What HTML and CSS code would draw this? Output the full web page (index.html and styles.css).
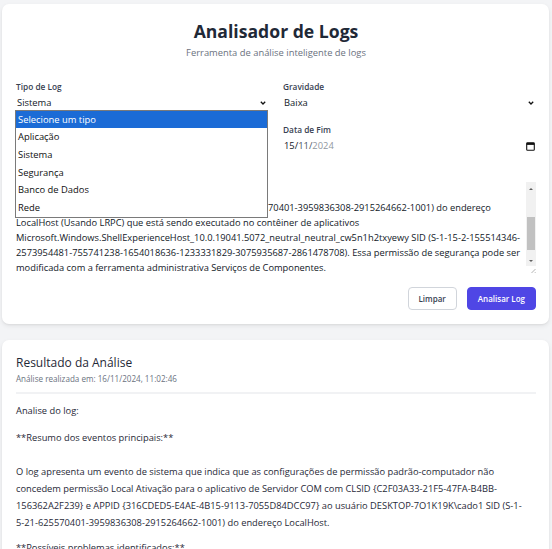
FILE: index.html
```html
<!DOCTYPE html>
<html lang="pt-BR">
<head>
<meta charset="utf-8">
<title>Analisador de Logs</title>
<link rel="stylesheet" href="styles.css">
</head>
<body>
<main class="page">
  <section class="card form-card">
    <header class="head">
      <h1 class="title">Analisador de Logs</h1>
      <p class="subtitle">Ferramenta de análise inteligente de logs</p>
    </header>

    <div class="grid">
      <div class="field">
        <label class="label">Tipo de Log</label>
        <div class="select">
          <span class="value">Sistema</span>
          <svg class="chev" viewBox="0 0 6 4" width="6" height="4"><polyline points="0.8,0.8 3,3 5.2,0.8" fill="none" stroke="#111" stroke-width="1.3"/></svg>
          <ul class="dropdown">
            <li class="opt active">Selecione um tipo</li>
            <li class="opt">Aplicação</li>
            <li class="opt">Sistema</li>
            <li class="opt">Segurança</li>
            <li class="opt">Banco de Dados</li>
            <li class="opt">Rede</li>
          </ul>
        </div>
      </div>
      <div class="field">
        <label class="label">Gravidade</label>
        <div class="select">
          <span class="value">Baixa</span>
          <svg class="chev" viewBox="0 0 6 4" width="6" height="4"><polyline points="0.8,0.8 3,3 5.2,0.8" fill="none" stroke="#111" stroke-width="1.3"/></svg>
        </div>
      </div>
      <div class="field">
        <label class="label">Data de Início</label>
        <div class="select">
          <span class="value">01/11/2024</span>
        </div>
      </div>
      <div class="field">
        <label class="label">Data de Fim</label>
        <div class="select">
          <span class="value"><span class="d1">15/</span><span class="d2">11/</span><span class="d3">2024</span></span>
          <svg class="cal" viewBox="0 0 9 9" width="9" height="9"><rect x="0.7" y="0.9" width="7.6" height="7.4" rx="0.8" fill="none" stroke="#111" stroke-width="1.1"/><rect x="0.7" y="0.9" width="7.6" height="2" fill="#111"/></svg>
        </div>
      </div>
    </div>

    <div class="field full">
      <label class="label">Conteúdo do Log</label>
      <div class="textarea">
        <div class="ta-text">
          <div class="ta-line">{316CDED5-E4AE-4B15-9113-7055D84DCC97}</div>
          <div class="ta-line"><span class="hidden-part">ao usuário DESKTOP-7O1K19K\cado1 SID (S-1-5-21-6255</span>70401-3959836308-2915264662-1001) do endereço</div>
          <div class="ta-line">LocalHost (Usando LRPC) que está sendo executado no contêiner de aplicativos</div>
          <div class="ta-line">Microsoft.Windows.ShellExperienceHost_10.0.19041.5072_neutral_neutral_cw5n1h2txyewy SID (S-1-15-2-155514346-</div>
          <div class="ta-line">2573954481-755741238-1654018636-1233331829-3075935687-2861478708). Essa permissão de segurança pode ser</div>
          <div class="ta-line">modificada com a ferramenta administrativa Serviços de Componentes.</div>
        </div>
        <div class="scrollbar">
          <svg class="arrow" viewBox="0 0 10 10" width="10" height="10"><polygon points="3,6 5,4 7,6" fill="#606060"/></svg>
          <div class="track"><div class="thumb"></div></div>
          <svg class="arrow" viewBox="0 0 10 10" width="10" height="10"><polygon points="3,4 5,6 7,4" fill="#606060"/></svg>
          <svg class="grip" viewBox="0 0 10 10" width="10" height="10"><line x1="3" y1="9.5" x2="9.5" y2="3" stroke="#a0a0a0" stroke-width="0.8"/><line x1="6.2" y1="9.5" x2="9.5" y2="6.2" stroke="#a0a0a0" stroke-width="0.8"/></svg>
        </div>
      </div>
    </div>

    <div class="actions">
      <button class="btn btn-light">Limpar</button>
      <button class="btn btn-primary">Analisar Log</button>
    </div>
  </section>

  <section class="card result-card">
    <h2 class="r-title">Resultado da Análise</h2>
    <p class="r-meta">Análise realizada em: 16/11/2024, 11:02:46</p>
    <hr class="rule">
    <div class="r-body">
      <p class="para p1">Analise do log:</p>
      <p class="para p2">**Resumo dos eventos principais:**</p>
      <p class="para p3">O log apresenta um evento de sistema que indica que as configurações de permissão padrão-computador não<br>concedem permissão Local Ativação para o aplicativo de Servidor COM com CLSID {C2F03A33-21F5-47FA-B4BB-<br>156362A2F239} e APPID {316CDED5-E4AE-4B15-9113-7055D84DCC97} ao usuário DESKTOP-7O1K19K\cado1 SID (S-1-<br>5-21-625570401-3959836308-2915264662-1001) do endereço LocalHost.</p>
      <p class="para">**Possíveis problemas identificados:**</p>
      <p class="para">1. Permissões de ativação local insuficientes para o usuário.</p>
    </div>
  </section>
</main>
</body>
</html>
```

FILE: styles.css
```css
* { box-sizing: border-box; }
html, body { margin: 0; padding: 0; }
body {
  background: #f3f4f6;
  font-family: "Open Sans", "Noto Sans", sans-serif;
  color: #1f2937;
  overflow: hidden;
  height: 549px;
}
.page {
  padding: 4px 3px 0 2px;
  display: flex;
  flex-direction: column;
  gap: 16px;
}
.card {
  background: #fff;
  border-radius: 7px;
  box-shadow: 0 2px 5px rgba(0, 0, 0, 0.07), 0 1px 2px rgba(0, 0, 0, 0.05);
}
.form-card {
  padding: 13px 13px 14px 14px;
}
.head { text-align: center; margin-bottom: 20px; }
.title {
  margin: 0;
  font-size: 17.6px;
  line-height: 28px;
  font-weight: 700;
  color: #1f2937;
}
.subtitle {
  margin: 1px 0 0;
  font-size: 9.4px;
  line-height: 14px;
  color: #6b7280;
}
.grid {
  display: grid;
  grid-template-columns: 252px 253px;
  column-gap: 15px;
  row-gap: 11px;
}
.field { display: flex; flex-direction: column; }
.full { margin-top: 11px; }
.label {
  font-size: 8.3px;
  line-height: 13px;
  font-weight: 600;
  color: #374151;
  margin-bottom: 1px;
}
.select {
  position: relative;
  height: 18px;
  display: flex;
  align-items: center;
  justify-content: space-between;
  padding: 0 2px 0 1px;
  font-size: 9.4px;
  color: #111827;
}
.value { line-height: 18px; }
.chev { display: block; }
.d1 { color: #111827; }
.d2 { color: #4b5563; }
.d3 { color: #9097a0; }
.cal { display: block; margin-right: -1px; }
.dropdown {
  position: absolute;
  top: 15.5px;
  left: -1px;
  width: 253px;
  margin: 0;
  padding: 0;
  list-style: none;
  background: #fff;
  border: 1px solid #7a7a7a;
  z-index: 10;
  font-size: 9.4px;
}
.opt {
  height: 17.7px;
  line-height: 17.7px;
  padding-left: 2px;
  color: #111;
}
.opt.active { background: #1b6bd6; color: #fff; }

.textarea {
  margin-top: 2px;
  height: 91px;
  display: flex;
  overflow: hidden;
}
.ta-text {
  flex: 1;
  overflow: hidden;
  font-size: 9.3px;
  line-height: 15px;
  color: #111827;
  padding-top: 2.5px;
}
.ta-line { white-space: nowrap; }
.hidden-part {
  display: inline-block;
  width: 252px;
  overflow: hidden;
  vertical-align: top;
  white-space: nowrap;
}
.scrollbar {
  width: 10px;
  display: flex;
  flex-direction: column;
  background: #f1f1f1;
}
.arrow { display: block; flex: none; margin-top: 2px; }
.track { flex: 1; padding: 23px 0 4px; }
.thumb { height: 33px; background: #c1c1c1; margin: 0 1px; }
.grip { display: block; flex: none; background: #fff; }

.actions {
  display: flex;
  justify-content: flex-end;
  gap: 10px;
  margin-top: 14px;
}
.btn {
  height: 23px;
  border-radius: 4px;
  font-family: inherit;
  font-size: 8px;
  font-weight: 600;
  padding: 0 10px;
  cursor: pointer;
}
.btn-light {
  background: #fff;
  border: 1px solid #d1d5db;
  color: #374151;
}
.btn-primary {
  background: #4f46e5;
  border: 1px solid #4f46e5;
  color: #fff;
}

.result-card {
  padding: 13px 13px 20px 14px;
  height: 260px;
}
.r-title {
  margin: 0;
  font-size: 12px;
  line-height: 20px;
  font-weight: 500;
  color: #1f2937;
}
.r-meta {
  margin: 0;
  font-size: 8.1px;
  line-height: 11px;
  color: #6b7280;
}
.rule {
  border: 0;
  border-top: 2px solid #f1f2f4;
  margin: 8px 0 0;
}
.r-body {
  margin-top: 8px;
  font-size: 9.3px;
  line-height: 17px;
  color: #1f2937;
}
.para { margin: 0 0 9px; white-space: nowrap; }
.p1 { margin-bottom: 10px; }
.p2 { margin-bottom: 17px; }
.p3 { margin-bottom: 8px; }
```
